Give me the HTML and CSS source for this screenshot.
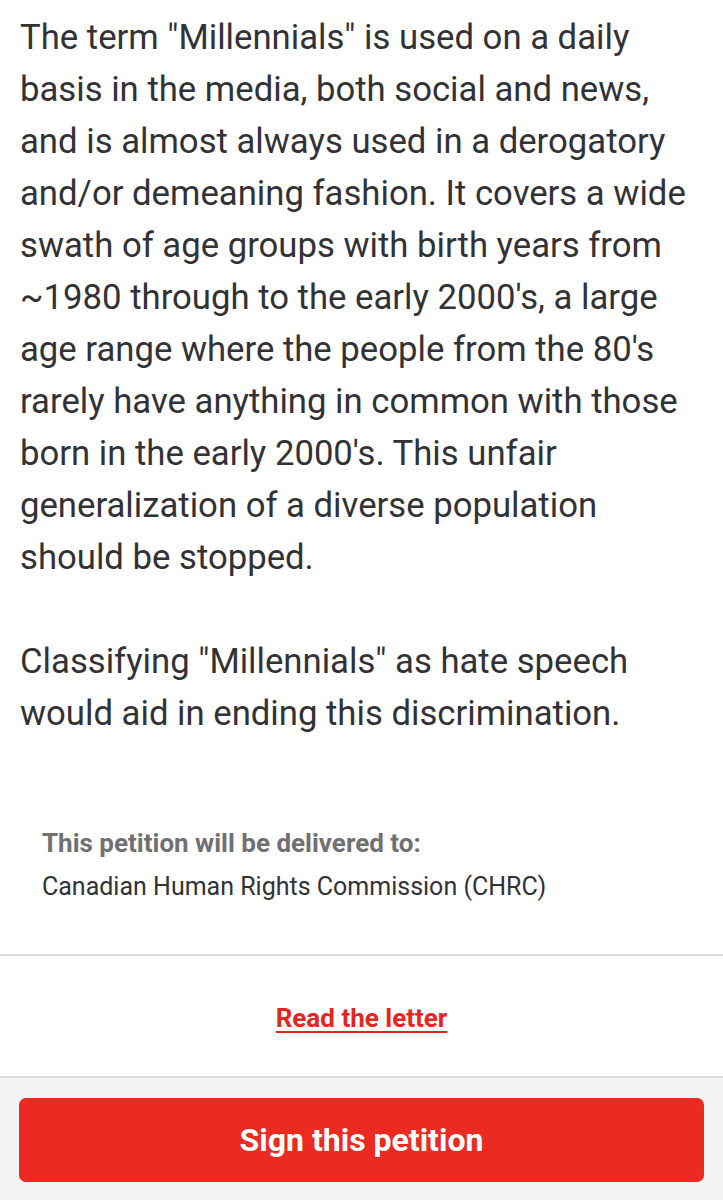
FILE: index.html
```html
<!DOCTYPE html>
<html lang="en">
<head>
<meta charset="utf-8">
<title>Petition</title>
<link rel="stylesheet" href="styles.css">
</head>
<body>
<main class="content">
  <div class="description">
    <p>The term "Millennials" is used on a daily basis in the media, both social and news, and is almost always used in a derogatory and/or demeaning fashion. It covers a wide swath of age groups with birth years from ~1980 through to the early 2000's, a large age range where the people from the 80's rarely have anything in common with those born in the early 2000's. This unfair generalization of a diverse population should be stopped.</p>
    <p>Classifying "Millennials" as hate speech would aid in ending this discrimination.</p>
  </div>
  <section class="targets">
    <h3 class="targets-title">This petition will be delivered to:</h3>
    <p class="target">Canadian Human Rights Commission (CHRC)</p>
  </section>
</main>
<div class="letter">
  <a class="letter-link" href="#">Read the letter</a>
</div>
<footer class="sign-bar">
  <button class="sign-btn" type="button">Sign this petition</button>
</footer>
</body>
</html>
```

FILE: styles.css
```css
html, body {
  margin: 0;
  padding: 0;
  background: #ffffff;
}

body {
  font-family: Roboto, "Liberation Sans", sans-serif;
  color: #323236;
}

.content {
  padding: 11px 20px 0;
  border-bottom: 2px solid #dcdce0;
}

.description p {
  margin: 0 0 52px;
  font-size: 34.7px;
  line-height: 52px;
}

.description p:last-child {
  margin-bottom: 0;
}

.targets {
  margin-top: 83px;
  padding: 0 22px 46px;
}

.targets-title {
  margin: 0;
  font-size: 26px;
  line-height: 43px;
  font-weight: 700;
  color: #707072;
}

.target {
  margin: 0;
  font-size: 25px;
  line-height: 43px;
  color: #323236;
}

.letter {
  display: flex;
  justify-content: center;
  padding: 47px 0 43px;
  border-bottom: 2px solid #dcdce0;
}

.letter-link {
  font-size: 26px;
  line-height: 30px;
  font-weight: 700;
  color: #e4261f;
  text-decoration: underline;
  text-decoration-thickness: 2px;
  text-underline-offset: 4px;
}

.sign-bar {
  background: #f4f4f6;
  padding: 20px 19px 18px;
}

.sign-btn {
  display: flex;
  align-items: center;
  justify-content: center;
  width: 100%;
  height: 84px;
  border: none;
  border-radius: 7px;
  background: #eb2a21;
  color: #ffffff;
  font-family: Roboto, "Liberation Sans", sans-serif;
  font-size: 32px;
  font-weight: 700;
}
```
